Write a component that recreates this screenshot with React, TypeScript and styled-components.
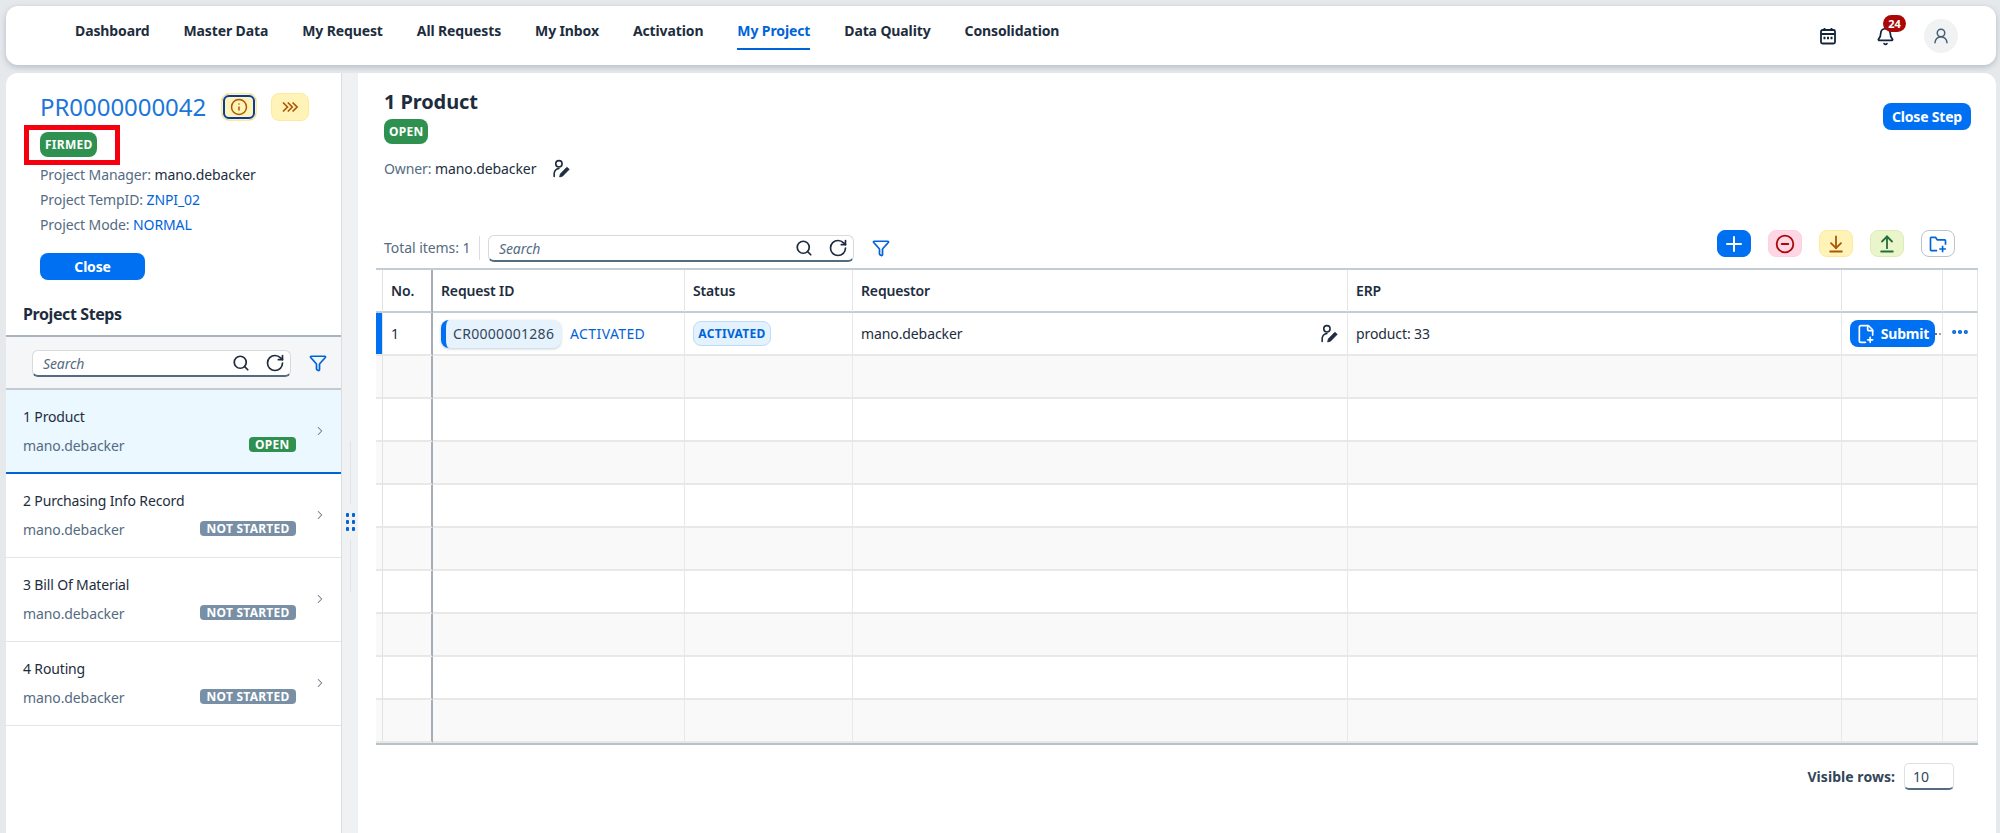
import React from 'react';
import styled, { createGlobalStyle } from 'styled-components';
import {
  ArrowDownToLine,
  ArrowUpFromLine,
  Bell,
  ChevronRight,
  CircleMinus,
  Ellipsis,
  FilePlus2,
  Filter,
  Info,
  Plus,
  RotateCw,
  Search,
  UserRound
} from 'lucide-react';

const FONT = `'Noto Sans', 'Open Sans', Arial, sans-serif`;
const TEXT = '#1d2d3e';
const MUTED = '#556b82';
const BLUE = '#0070f2';
const LINK = '#0064d9';

const GlobalStyle = createGlobalStyle`
  html, body {
    margin: 0;
    padding: 0;
    height: 100%;
    background: #e6e9ec;
    overflow: hidden;
  }
  * { box-sizing: border-box; }
  body {
    font-family: ${FONT};
    color: ${TEXT};
  }
`;

const Page = styled.div`
  width: 2000px;
  height: 833px;
  padding: 6px 4px 0 6px;
  display: flex;
  flex-direction: column;
  gap: 8px;
  overflow: hidden;
`;

const TopBar = styled.header`
  height: 59px;
  flex: none;
  background: #fff;
  border-radius: 12px;
  box-shadow: 0 2px 6px rgba(50, 70, 90, 0.28);
  display: flex;
  align-items: flex-start;
  padding: 0 38px 0 69px;
`;

const NavList = styled.nav`
  display: flex;
  gap: 34px;
  flex: 1;
`;

const NavItem = styled.a<{ $active?: boolean }>`
  height: 42px;
  padding: 15px 0 0;
  font-size: 14px;
  line-height: 20px;
  font-weight: 700;
  letter-spacing: -0.12px;
  color: ${p => (p.$active ? LINK : TEXT)};
  box-shadow: ${p => (p.$active ? `0 2px 0 ${LINK}` : 'none')};
  white-space: nowrap;
`;

const TopActions = styled.div`
  display: flex;
  align-items: center;
  height: 60px;
`;

const BellWrap = styled.div`
  position: relative;
  width: 24px;
  height: 24px;
  margin: 0 27px 0 36px;
  display: flex;
  align-items: center;
  justify-content: center;
`;

const CountBadge = styled.span`
  position: absolute;
  top: -9px;
  right: -9px;
  min-width: 23px;
  height: 17px;
  border-radius: 9px;
  background: #aa0808;
  color: #fff;
  font-size: 11px;
  line-height: 17px;
  font-weight: 700;
  text-align: center;
`;

const Avatar = styled.div`
  width: 34px;
  height: 34px;
  border-radius: 50%;
  background: #f1f2f3;
  color: #475e75;
  display: flex;
  align-items: center;
  justify-content: center;
`;

const Body = styled.div`
  flex: 1;
  min-height: 0;
  display: flex;
`;

const LeftPanel = styled.aside`
  width: 336px;
  flex: none;
  background: #fff;
  border-radius: 12px 0 0 0;
  border-right: 1px solid #d9dee3;
  display: flex;
  flex-direction: column;
`;

const ProjectHead = styled.div`
  padding: 20px 0 0 34px;
  height: 221px;
  flex: none;
  position: relative;
`;

const ProjectTitleRow = styled.div`
  display: flex;
  align-items: center;
  height: 28px;
`;

const ProjectId = styled.h1`
  margin: 0 15px 0 0;
  font-size: 24px;
  font-weight: 400;
  color: #1b76d9;
  letter-spacing: -0.05px;
  line-height: 28px;
  width: 166px;
  white-space: nowrap;
`;

const YellowButton = styled.button<{ $focused?: boolean }>`
  width: ${p => (p.$focused ? '36px' : '38px')};
  height: 28px;
  margin-right: 14px;
  padding: 0;
  border-radius: 8px;
  background: #fff3b8;
  border: 1px solid #ffe99a;
  color: #aa5808;
  display: flex;
  align-items: center;
  justify-content: center;
  ${p => p.$focused && `box-shadow: inset 0 0 0 1px #fff3b8, inset 0 0 0 3px #0a3aa8;`}
`;

const Tag = styled.span<{ $color: string; $size?: 'lg' | 'sm' }>`
  display: inline-flex;
  align-items: center;
  justify-content: center;
  background: ${p => p.$color};
  color: #fff;
  font-weight: 700;
  white-space: nowrap;
  font-size: 12px;
  height: ${p => (p.$size === 'lg' ? '25px' : '15px')};
  padding: ${p => (p.$size === 'lg' ? '0 5px' : '0 6.5px')};
  border-radius: ${p => (p.$size === 'lg' ? '8px' : '4px')};
  letter-spacing: 0.25px;
`;

const FirmedRow = styled.div`
  margin-top: 11px;
  height: 25px;
  display: flex;
`;

const Highlight = styled.div`
  position: absolute;
  left: 18px;
  top: 52px;
  width: 96px;
  height: 40px;
  border: 5px solid #f5000f;
  pointer-events: none;
`;

const MetaLine = styled.div`
  height: 25px;
  font-size: 14px;
  line-height: 25px;
  color: ${MUTED};
  letter-spacing: -0.1px;
  white-space: nowrap;
`;

const MetaList = styled.div`
  margin-top: 5px;
`;

const MetaValue = styled.span<{ $link?: boolean }>`
  color: ${p => (p.$link ? LINK : TEXT)};
`;

const PrimaryButton = styled.button<{ $width: number; $height?: number }>`
  width: ${p => p.$width}px;
  height: ${p => p.$height ?? 27}px;
  border: none;
  padding: 0;
  border-radius: 8px;
  background: ${BLUE};
  color: #fff;
  font-family: ${FONT};
  font-size: 14px;
  font-weight: 700;
  letter-spacing: -0.2px;
  display: flex;
  align-items: center;
  justify-content: center;
  gap: 5px;
  flex: none;
`;

const CloseWrap = styled.div`
  margin-top: 16px;
`;

const StepsTitle = styled.div`
  height: 43px;
  flex: none;
  padding: 9px 0 0 17px;
  font-size: 16px;
  line-height: 22px;
  font-weight: 700;
  letter-spacing: -0.4px;
  border-bottom: 2px solid #a9b4be;
`;

const SearchBand = styled.div`
  height: 53px;
  flex: none;
  padding: 13px 0 0 26px;
  background: #f5f6f7;
  border-bottom: 2px solid #c2cbd3;
  display: flex;
  align-items: flex-start;
  gap: 18px;
`;

const SearchBox = styled.div<{ $width: number }>`
  width: ${p => p.$width}px;
  height: 27px;
  flex: none;
  background: #fff;
  border: 1px solid #d5dadd;
  border-bottom: 2px solid #556b82;
  border-radius: 6px;
  display: flex;
  align-items: center;
  padding: 0 5px 0 10px;
  color: #1d2d3e;
`;

const SearchPlaceholder = styled.span`
  flex: 1;
  font-size: 14px;
  font-style: italic;
  color: ${MUTED};
  letter-spacing: -0.1px;
`;

const SearchIcons = styled.div`
  display: flex;
  gap: 15px;
  align-items: center;
`;

const FilterWrap = styled.div`
  color: ${LINK};
  display: flex;
  margin-top: 4px;
`;

const StepItem = styled.div<{ $selected?: boolean }>`
  height: 84px;
  flex: none;
  background: ${p => (p.$selected ? '#ebf8ff' : '#fff')};
  border-bottom: ${p => (p.$selected ? `2px solid ${LINK}` : '1px solid #e5e5e5')};
  padding: 17px 17px 0 17px;
  display: flex;
  gap: 16px;
`;

const StepText = styled.div`
  width: 273px;
  flex: none;
`;

const StepTitle = styled.div`
  font-size: 14px;
  line-height: 20px;
  letter-spacing: -0.15px;
  color: ${TEXT};
  white-space: nowrap;
`;

const StepFoot = styled.div`
  display: flex;
  justify-content: space-between;
  align-items: flex-start;
  margin-top: 9px;
`;

const StepOwner = styled.span`
  font-size: 14px;
  line-height: 20px;
  letter-spacing: -0.1px;
  color: ${MUTED};
`;

const StepTag = styled(Tag)`
  margin-top: 1px;
`;

const ChevronWrap = styled.div`
  color: #64798f;
  margin-top: 17px;
  margin-left: 1px;
  display: flex;
`;

const Resizer = styled.div`
  width: 16px;
  flex: none;
  background: #eff1f3;
  display: flex;
  flex-direction: column;
  align-items: center;
  padding-top: 368px;
`;

const ResizerLine = styled.div<{ $height: number }>`
  width: 1px;
  height: ${p => p.$height}px;
  background: #dfe3e7;
  flex: none;
`;

const Grip = styled.div`
  display: grid;
  grid-template-columns: 3px 3px;
  gap: 3px;
  margin: 9px 0;
  flex: none;
`;

const GripDot = styled.span`
  width: 3px;
  height: 4px;
  background: ${LINK};
  border-radius: 1px;
`;

const RightPanel = styled.main`
  flex: 1;
  min-width: 0;
  background: #fff;
  border-radius: 0 12px 0 0;
  padding: 0 17px 0 18px;
  display: flex;
  flex-direction: column;
`;

const StepHeader = styled.div`
  height: 161px;
  flex: none;
  padding: 15px 0 0 8px;
  position: relative;
`;

const StepHeading = styled.h2`
  margin: 0;
  font-size: 20px;
  line-height: 27px;
  font-weight: 700;
  letter-spacing: -0.1px;
`;

const HeaderTag = styled.div`
  display: flex;
  margin-top: 4px;
`;

const OwnerRow = styled.div`
  display: flex;
  align-items: center;
  margin-top: 12px;
  height: 24px;
  font-size: 14px;
  letter-spacing: -0.1px;
  color: ${MUTED};
`;

const OwnerIcon = styled.span`
  display: flex;
  margin-left: 15px;
  color: ${TEXT};
`;

const CloseStepWrap = styled.div`
  position: absolute;
  right: 8px;
  top: 30px;
`;

const Toolbar = styled.div`
  height: 34px;
  flex: none;
  display: flex;
  align-items: flex-start;
  padding-left: 8px;
`;

const TotalItems = styled.span`
  font-size: 14px;
  line-height: 28px;
  color: ${MUTED};
  letter-spacing: -0.05px;
  width: 104px;
  flex: none;
  position: relative;
  white-space: nowrap;
  &::after {
    content: '';
    position: absolute;
    right: 8px;
    top: 2px;
    height: 24px;
    width: 1px;
    background: #d9dee3;
  }
`;

const ToolbarLeft = styled.div`
  display: flex;
  align-items: flex-start;
  gap: 18px;
  flex: 1;
  padding-top: 1px;
`;

const ToolbarActions = styled.div`
  display: flex;
  gap: 17px;
  padding-right: 24px;
  margin-top: -4px;
`;

const IconButton = styled.button<{ $bg: string; $border: string; $color: string }>`
  width: 34px;
  height: 27px;
  padding: 0;
  border-radius: 8px;
  background: ${p => p.$bg};
  border: 1px solid ${p => p.$border};
  color: ${p => p.$color};
  display: flex;
  align-items: center;
  justify-content: center;
`;

const Table = styled.table`
  width: 1602px;
  flex: none;
  table-layout: fixed;
  border-collapse: separate;
  border-spacing: 0;
  border-top: 2px solid #c4ccd3;
  border-bottom: 2px solid #b8c0c8;
`;

const HeadCell = styled.th`
  height: 43px;
  padding: 0 0 0 8px;
  text-align: left;
  font-size: 14px;
  font-weight: 600;
  letter-spacing: -0.15px;
  color: ${TEXT};
  border-right: 1px solid #e5e5e5;
  border-bottom: 2px solid #c4ccd3;
  &:nth-child(1) { padding: 0; border-right: 1px solid #e0e3e6; }
  &:nth-child(2) { border-right: 2px solid #a5aeb6; }
`;

const Row = styled.tr<{ $odd?: boolean }>`
  background: ${p => (p.$odd ? '#f9f9f9' : '#fff')};
`;

const Cell = styled.td`
  height: 43px;
  padding: 0 0 0 8px;
  font-size: 14px;
  letter-spacing: -0.1px;
  color: ${TEXT};
  border-right: 1px solid #e8e8e8;
  border-bottom: 2px solid #e8e8e8;
  position: relative;
  white-space: nowrap;
  &:nth-child(1) { padding: 0; border-right: 1px solid #e0e3e6; }
  &:nth-child(2) { border-right: 2px solid #a5aeb6; }
`;

const NumberCell = styled(Cell)`
  &:nth-child(2) { padding: 0 0 0 8px; }
`;

const Marker = styled.td<{ $on?: boolean }>`
  padding: 0;
  background: ${p => (p.$on ? BLUE : 'transparent')};
  border-right: 1px solid #e0e3e6;
  border-bottom: 2px solid #e8e8e8;
`;

const RequestCell = styled.div`
  display: flex;
  align-items: center;
  gap: 9px;
`;

const RequestPill = styled.span`
  height: 28px;
  width: 120px;
  display: flex;
  align-items: center;
  padding-left: 7px;
  background: #e6f3fd;
  border-left: 5px solid ${BLUE};
  border-radius: 8px;
  box-shadow: 0 1px 3px rgba(60, 90, 120, 0.3);
  font-size: 14px;
  color: #32465a;
  letter-spacing: 0.3px;
`;

const RequestStatus = styled.span`
  color: ${LINK};
  letter-spacing: 0.4px;
`;

const StatusTag = styled.span`
  display: inline-flex;
  align-items: center;
  justify-content: center;
  width: 78px;
  height: 25px;
  background: #e4f2fe;
  border: 1px solid #bcdcf9;
  border-radius: 8px;
  font-size: 12px;
  font-weight: 700;
  color: ${LINK};
  letter-spacing: 0.3px;
`;

const RowEdit = styled.span`
  position: absolute;
  right: 9px;
  top: 11px;
  display: flex;
  color: ${TEXT};
`;

const MoreCell = styled(Cell)`
  color: ${LINK};
  padding: 0 0 0 7px;
`;

const SubmitWrap = styled.div`
  position: relative;
`;

const StrayDots = styled.span`
  position: absolute;
  right: 1px;
  top: 13px;
  width: 6px;
  height: 2px;
  border-left: 2px solid #64748b;
  border-right: 2px solid #94a3b8;
`;

const Footer = styled.div`
  display: flex;
  justify-content: flex-end;
  align-items: center;
  gap: 9px;
  margin-top: 18px;
  padding-right: 25px;
`;

const VisibleLabel = styled.span`
  font-size: 14px;
  font-weight: 700;
  color: #32465a;
  letter-spacing: 0.05px;
`;

const VisibleInput = styled.div`
  width: 50px;
  height: 27px;
  background: #fff;
  border: 1px solid #dde1e5;
  border-bottom: 2px solid #556b82;
  border-radius: 5px;
  font-size: 14px;
  line-height: 25px;
  padding-left: 8px;
  color: #32465a;
`;

const steps = [
  { title: '1 Product', tag: 'OPEN', selected: true },
  { title: '2 Purchasing Info Record', tag: 'NOT STARTED' },
  { title: '3 Bill Of Material', tag: 'NOT STARTED' },
  { title: '4 Routing', tag: 'NOT STARTED' }
];

const navItems = ['Dashboard', 'Master Data', 'My Request', 'All Requests', 'My Inbox', 'Activation', 'My Project', 'Data Quality', 'Consolidation'];

const columnWidths = [7, 50, 252, 168, 495, 494, 101, 35];

// SAP style glyphs that the icon packages don't have
function PersonEdit() {
  return (
    <svg width="19" height="19" viewBox="0 0 24 24" fill="none" stroke="currentColor" strokeWidth="2">
      <circle cx="10" cy="6" r="4" />
      <path d="M4 22v-4a7 7 0 0 1 6-6" strokeLinecap="round" />
      <path d="M20 10.5l3 2.6-8.5 8.6-3.6 1 .9-3.8z" fill="currentColor" strokeWidth="1" strokeLinejoin="round" />
    </svg>
  );
}

function CalendarIcon() {
  return (
    <svg width="18" height="18" viewBox="0 0 18 18" fill="none" stroke="#12253a" strokeWidth="1.8">
      <rect x="2" y="3" width="14" height="13.5" rx="1.5" />
      <path d="M2 7h14M5.5 1v3M12.5 1v3" />
      <path d="M4.5 11h2M8 11h2M11.5 11h2" strokeWidth="2.4" />
    </svg>
  );
}

function TripleChevron() {
  return (
    <svg width="18" height="14" viewBox="0 0 18 14" fill="none" stroke="currentColor" strokeWidth="1.7">
      <path d="M2 2.5L6.5 7 2 11.5M6.8 2.5L11.3 7l-4.5 4.5M11.6 2.5L16.1 7l-4.5 4.5" />
    </svg>
  );
}

function FolderAdd() {
  return (
    <svg width="20" height="20" viewBox="0 0 24 24" fill="none" stroke="currentColor" strokeWidth="2">
      <path d="M11 20H4a1 1 0 0 1-1-1V5a1 1 0 0 1 1-1h5l2 3h9a1 1 0 0 1 1 1v5" strokeLinejoin="round" />
      <path d="M17.5 14v8M13.5 18h8" />
    </svg>
  );
}

function SearchField({ width }: { width: number }) {
  return (
    <SearchBox $width={width}>
      <SearchPlaceholder>Search</SearchPlaceholder>
      <SearchIcons>
        <Search size={18} strokeWidth={2.3} />
        <RotateCw size={20} strokeWidth={2} />
      </SearchIcons>
    </SearchBox>
  );
}

export default function App() {
  return (
    <Page>
      <GlobalStyle />
      <TopBar>
        <NavList>
          {navItems.map(item => (
            <NavItem key={item} $active={item === 'My Project'}>{item}</NavItem>
          ))}
        </NavList>
        <TopActions>
          <CalendarIcon />
          <BellWrap>
            <Bell size={19} strokeWidth={2.2} color="#12253a" />
            <CountBadge>24</CountBadge>
          </BellWrap>
          <Avatar><UserRound size={18} strokeWidth={2} /></Avatar>
        </TopActions>
      </TopBar>

      <Body>
        <LeftPanel>
          <ProjectHead>
            <ProjectTitleRow>
              <ProjectId>PR0000000042</ProjectId>
              <YellowButton $focused><Info size={18} strokeWidth={2} /></YellowButton>
              <YellowButton><TripleChevron /></YellowButton>
            </ProjectTitleRow>
            <FirmedRow>
              <Tag $color="#2f9150" $size="lg">FIRMED</Tag>
            </FirmedRow>
            <Highlight />
            <MetaList>
              <MetaLine>Project Manager: <MetaValue>mano.debacker</MetaValue></MetaLine>
              <MetaLine>Project TempID: <MetaValue $link>ZNPI_02</MetaValue></MetaLine>
              <MetaLine>Project Mode: <MetaValue $link>NORMAL</MetaValue></MetaLine>
            </MetaList>
            <CloseWrap>
              <PrimaryButton $width={105}>Close</PrimaryButton>
            </CloseWrap>
          </ProjectHead>
          <StepsTitle>Project Steps</StepsTitle>
          <SearchBand>
            <SearchField width={259} />
            <FilterWrap><Filter size={18} strokeWidth={2.3} /></FilterWrap>
          </SearchBand>
          {steps.map(step => (
            <StepItem key={step.title} $selected={step.selected}>
              <StepText>
                <StepTitle>{step.title}</StepTitle>
                <StepFoot>
                  <StepOwner>mano.debacker</StepOwner>
                  <StepTag $color={step.tag === 'OPEN' ? '#2f9150' : '#788fa6'}>{step.tag}</StepTag>
                </StepFoot>
              </StepText>
              <ChevronWrap><ChevronRight size={14} strokeWidth={1.8} /></ChevronWrap>
            </StepItem>
          ))}
        </LeftPanel>

        <Resizer>
          <ResizerLine $height={63} />
          <Grip>
            {[0, 1, 2, 3, 4, 5].map(i => <GripDot key={i} />)}
          </Grip>
          <ResizerLine $height={52} />
        </Resizer>

        <RightPanel>
          <StepHeader>
            <StepHeading>1 Product</StepHeading>
            <HeaderTag><Tag $color="#2f9150" $size="lg">OPEN</Tag></HeaderTag>
            <OwnerRow>
              Owner:&nbsp;<MetaValue>mano.debacker</MetaValue>
              <OwnerIcon><PersonEdit /></OwnerIcon>
            </OwnerRow>
            <CloseStepWrap>
              <PrimaryButton $width={88}>Close Step</PrimaryButton>
            </CloseStepWrap>
          </StepHeader>

          <Toolbar>
            <TotalItems>Total items: 1</TotalItems>
            <ToolbarLeft>
              <SearchField width={366} />
              <FilterWrap><Filter size={18} strokeWidth={2.3} /></FilterWrap>
            </ToolbarLeft>
            <ToolbarActions>
              <IconButton $bg={BLUE} $border={BLUE} $color="#fff"><Plus size={24} strokeWidth={2} /></IconButton>
              <IconButton $bg="#ffd6e6" $border="#ffd0e0" $color="#aa0808"><CircleMinus size={20} strokeWidth={2.2} /></IconButton>
              <IconButton $bg="#fff3b8" $border="#ffe99a" $color="#aa5808"><ArrowDownToLine size={20} strokeWidth={2.2} /></IconButton>
              <IconButton $bg="#ebf5cb" $border="#dcedb5" $color="#256f3a"><ArrowUpFromLine size={20} strokeWidth={2.2} /></IconButton>
              <IconButton $bg="#fff" $border="#bcc3ca" $color={LINK}><FolderAdd /></IconButton>
            </ToolbarActions>
          </Toolbar>

          <Table>
            <colgroup>
              {columnWidths.map((w, i) => <col key={i} style={{ width: w }} />)}
            </colgroup>
            <thead>
              <tr>
                <HeadCell />
                <HeadCell>No.</HeadCell>
                <HeadCell>Request ID</HeadCell>
                <HeadCell>Status</HeadCell>
                <HeadCell>Requestor</HeadCell>
                <HeadCell>ERP</HeadCell>
                <HeadCell />
                <HeadCell />
              </tr>
            </thead>
            <tbody>
              <Row>
                <Marker $on />
                <NumberCell>1</NumberCell>
                <Cell>
                  <RequestCell>
                    <RequestPill>CR0000001286</RequestPill>
                    <RequestStatus>ACTIVATED</RequestStatus>
                  </RequestCell>
                </Cell>
                <Cell><StatusTag>ACTIVATED</StatusTag></Cell>
                <Cell>
                  mano.debacker
                  <RowEdit><PersonEdit /></RowEdit>
                </Cell>
                <Cell>product: 33</Cell>
                <Cell>
                  <SubmitWrap>
                    <PrimaryButton $width={85}>
                      <FilePlus2 size={20} strokeWidth={2} />
                      Submit
                    </PrimaryButton>
                    <StrayDots />
                  </SubmitWrap>
                </Cell>
                <MoreCell><Ellipsis size={20} strokeWidth={3} /></MoreCell>
              </Row>
              {[1, 2, 3, 4, 5, 6, 7, 8, 9].map(i => (
                <Row key={i} $odd={i % 2 === 1}>
                  <Marker />
                  <Cell />
                  <Cell />
                  <Cell />
                  <Cell />
                  <Cell />
                  <Cell />
                  <Cell />
                </Row>
              ))}
            </tbody>
          </Table>

          <Footer>
            <VisibleLabel>Visible rows:</VisibleLabel>
            <VisibleInput>10</VisibleInput>
          </Footer>
        </RightPanel>
      </Body>
    </Page>
  );
}
